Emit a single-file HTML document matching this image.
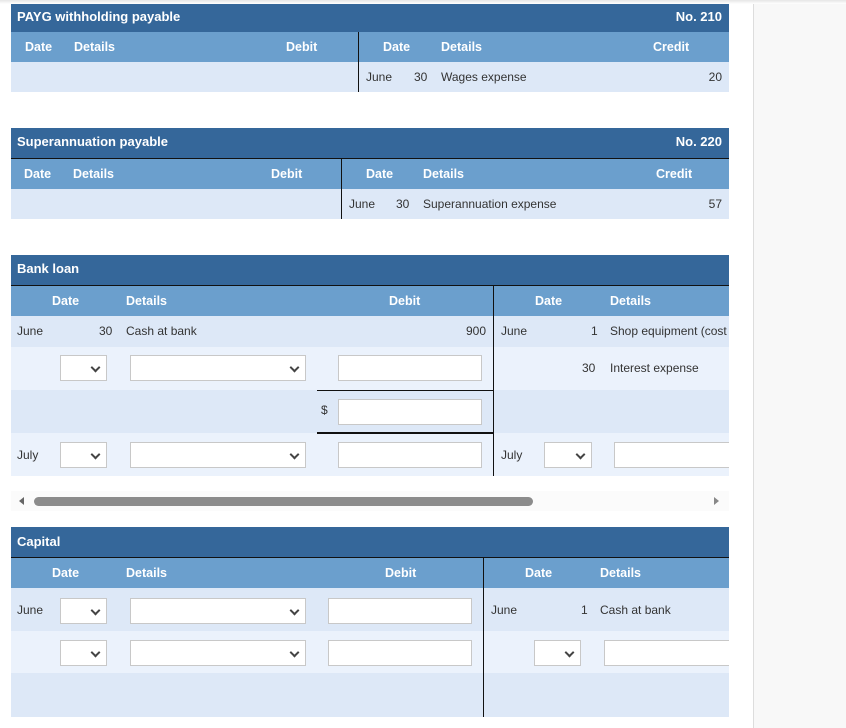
<!DOCTYPE html>
<html><head><meta charset="utf-8"><style>
*{margin:0;padding:0;box-sizing:border-box}
body{width:846px;height:728px;background:#fff;position:relative;overflow:hidden;font-family:"Liberation Sans",sans-serif;font-size:12px;color:#333}
.a{position:absolute}
.hd{background:#35679a;color:#fff;font-weight:bold;font-size:13px;border-bottom:1px solid #111;left:11px;width:718px;height:31px}
.sh{background:#6b9fcd;left:11px;width:718px;height:30px}
.sh span{position:absolute;top:8px;color:#fff;font-weight:bold;font-size:12.5px}
.r1{background:#dde8f7;left:11px;width:718px;overflow:hidden}
.r2{background:#ebf2fc;left:11px;width:718px;overflow:hidden}
.vl{background:#111;width:1px}
.t{position:absolute;white-space:nowrap}
.sel{position:absolute;background:#fff;border:1px solid #c8c8c8;height:26px}
.sel:after{content:"";position:absolute;right:7px;top:8px;width:5px;height:5px;border-right:2px solid #444;border-bottom:2px solid #444;transform:rotate(45deg)}
.inp{position:absolute;background:#fff;border:1px solid #c8c8c8;height:26px}
</style></head><body>
<div class="a" style="left:0;top:0;width:846px;height:4px;background:linear-gradient(#e6e6e6,#fff)"></div>
<div class="a" style="left:753px;top:4px;width:93px;height:724px;background:#f8f8f8;border-left:1px solid #ddd"></div>

<!-- PAYG -->
<div class="a hd" style="top:4px"><span class="t" style="left:6px;top:5px">PAYG withholding payable</span><span class="t" style="right:7px;top:5px">No. 210</span></div>
<div class="a sh" style="top:32px"><span style="left:14px">Date</span><span style="left:63px">Details</span><span style="left:275px">Debit</span><span style="left:372px">Date</span><span style="left:430px">Details</span><span style="left:642px">Credit</span></div>
<div class="a r1" style="top:62px;height:30px"><span class="t" style="left:355px;top:8px">June</span><span class="t" style="left:403px;top:8px">30</span><span class="t" style="left:430px;top:8px">Wages expense</span><span class="t" style="right:7px;top:8px">20</span></div>
<div class="a vl" style="left:358px;top:32px;height:60px"></div>

<!-- Super -->
<div class="a hd" style="top:128px"><span class="t" style="left:6px;top:6px">Superannuation payable</span><span class="t" style="right:7px;top:6px">No. 220</span></div>
<div class="a sh" style="top:159px"><span style="left:13px">Date</span><span style="left:62px">Details</span><span style="left:260px">Debit</span><span style="left:355px">Date</span><span style="left:412px">Details</span><span style="left:645px">Credit</span></div>
<div class="a r1" style="top:189px;height:30px"><span class="t" style="left:338px;top:8px">June</span><span class="t" style="left:385px;top:8px">30</span><span class="t" style="left:412px;top:8px">Superannuation expense</span><span class="t" style="right:7px;top:8px">57</span></div>
<div class="a vl" style="left:341px;top:159px;height:60px"></div>

<!-- Bank loan -->
<div class="a hd" style="top:255px"><span class="t" style="left:6px;top:6px">Bank loan</span></div>
<div class="a sh" style="top:286px"><span style="left:41px">Date</span><span style="left:115px">Details</span><span style="left:378px">Debit</span><span style="left:524px">Date</span><span style="left:599px">Details</span></div>
<div class="a r1" style="top:316px;height:31px"><span class="t" style="left:6px;top:8px">June</span><span class="t" style="left:88px;top:8px">30</span><span class="t" style="left:115px;top:8px">Cash at bank</span><span class="t" style="left:455px;top:8px">900</span><span class="t" style="left:490px;top:8px">June</span><span class="t" style="left:580px;top:8px">1</span><span class="t" style="left:599px;top:8px">Shop equipment (cost</span></div>
<div class="a r2" style="top:347px;height:43px"><div class="sel" style="left:49px;top:8px;width:47px"></div><div class="sel" style="left:119px;top:8px;width:176px"></div><div class="inp" style="left:327px;top:8px;width:144px"></div><span class="t" style="left:571px;top:14px">30</span><span class="t" style="left:599px;top:14px">Interest expense</span></div>
<div class="a r1" style="top:390px;height:43px"><span class="t" style="left:310px;top:13px">$</span><div class="inp" style="left:327px;top:9px;width:144px"></div></div>
<div class="a r2" style="top:433px;height:43px"><span class="t" style="left:6px;top:15px">July</span><div class="sel" style="left:49px;top:9px;width:47px"></div><div class="sel" style="left:119px;top:9px;width:176px"></div><div class="inp" style="left:327px;top:9px;width:144px"></div><span class="t" style="left:490px;top:15px">July</span><div class="sel" style="left:533px;top:9px;width:48px"></div><div class="inp" style="left:603px;top:9px;width:130px;border-right:none"></div></div>
<div class="a" style="left:11px;top:476px;width:718px;height:15px;background:#fff"></div>
<div class="a vl" style="left:493px;top:286px;height:190px"></div>
<div class="a" style="left:317px;top:390px;width:176px;height:1px;background:#111"></div>
<div class="a" style="left:317px;top:432px;width:176px;height:2px;background:#111"></div>
<div class="a" style="left:11px;top:491px;width:718px;height:20px;background:#fbfbfb"></div>
<div class="a" style="left:19px;top:497px;width:0;height:0;border-top:4px solid transparent;border-bottom:4px solid transparent;border-right:5px solid #666"></div>
<div class="a" style="left:34px;top:497px;width:499px;height:9px;background:#8c8c8c;border-radius:5px"></div>
<div class="a" style="left:714px;top:497px;width:0;height:0;border-top:4px solid transparent;border-bottom:4px solid transparent;border-left:5px solid #888"></div>

<!-- Capital -->
<div class="a hd" style="top:527px"><span class="t" style="left:6px;top:7px">Capital</span></div>
<div class="a sh" style="top:558px"><span style="left:41px">Date</span><span style="left:115px">Details</span><span style="left:374px">Debit</span><span style="left:514px">Date</span><span style="left:589px">Details</span></div>
<div class="a r1" style="top:588px;height:43px"><span class="t" style="left:6px;top:15px">June</span><div class="sel" style="left:49px;top:10px;width:47px"></div><div class="sel" style="left:119px;top:10px;width:176px"></div><div class="inp" style="left:317px;top:10px;width:144px"></div><span class="t" style="left:480px;top:15px">June</span><span class="t" style="left:570px;top:15px">1</span><span class="t" style="left:589px;top:15px">Cash at bank</span></div>
<div class="a r2" style="top:631px;height:42px"><div class="sel" style="left:49px;top:9px;width:47px"></div><div class="sel" style="left:119px;top:9px;width:176px"></div><div class="inp" style="left:317px;top:9px;width:144px"></div><div class="sel" style="left:523px;top:9px;width:47px"></div><div class="inp" style="left:593px;top:9px;width:140px;border-right:none"></div></div>
<div class="a r1" style="top:673px;height:44px"></div>
<div class="a vl" style="left:483px;top:558px;height:159px"></div>
</body></html>
